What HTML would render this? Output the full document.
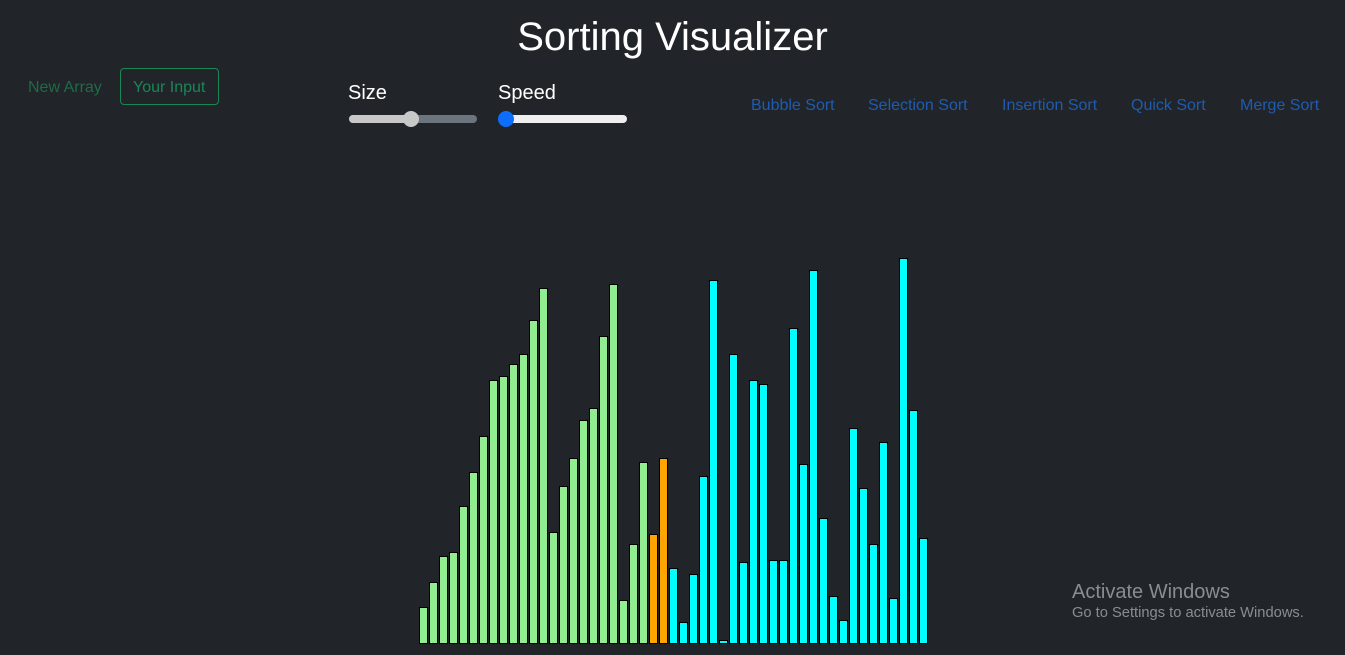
<!DOCTYPE html>
<html><head><meta charset="utf-8"><style>
body{margin:0;width:1345px;height:655px;background:#212529;overflow:hidden;font-family:"Liberation Sans",Arial,sans-serif;position:relative;color:#fff}
.a{position:absolute;white-space:nowrap}
h1{position:absolute;left:0;width:1345px;text-align:center;top:15px;margin:0;font-size:40px;font-weight:normal;color:#fff}
.nav{color:#1f5bb0;font-size:16px;top:97px}
.track{position:absolute;height:8px;border-radius:4px}
.thumb{position:absolute;width:16px;height:16px;border-radius:50%}
#bars{position:absolute;left:419px;bottom:11px;display:flex;align-items:flex-end}
#bars div{width:7px;border:1px solid #000;margin-right:1px;box-sizing:content-box;background:#90ee90}
</style></head><body>
<h1>Sorting Visualizer</h1>
<div class="a" style="left:28px;top:79px;font-size:16px;color:#1e6b45">New Array</div>
<div class="a" style="left:120px;top:68px;width:97px;height:35px;border:1px solid #198754;border-radius:4px;box-sizing:content-box"></div>
<div class="a" style="left:133px;top:79px;font-size:16px;color:#198754">Your Input</div>
<div class="a" style="left:348px;top:82px;font-size:20px">Size</div>
<div class="a" style="left:498px;top:82px;font-size:20px">Speed</div>
<div class="track" style="left:349px;top:115px;width:128px;background:#6c757d"></div>
<div class="track" style="left:349px;top:115px;width:62px;background:#c8c8c8"></div>
<div class="thumb" style="left:403px;top:111px;background:#c8c8c8"></div>
<div class="track" style="left:499px;top:115px;width:128px;background:#efefef"></div>
<div class="thumb" style="left:498px;top:111px;background:#0d6efd"></div>
<div class="a nav" style="left:751px">Bubble Sort</div>
<div class="a nav" style="left:868px">Selection Sort</div>
<div class="a nav" style="left:1002px">Insertion Sort</div>
<div class="a nav" style="left:1131px">Quick Sort</div>
<div class="a nav" style="left:1240px">Merge Sort</div>
<div class="a" style="left:1072px;top:581px;font-size:20px;color:#8a8d90">Activate Windows</div>
<div class="a" style="left:1072px;top:605px;font-size:14.7px;color:#8a8d90">Go to Settings to activate Windows.</div>
<div id="bars">
<div style="height:35px"></div><div style="height:60px"></div><div style="height:86px"></div><div style="height:90px"></div><div style="height:136px"></div><div style="height:170px"></div><div style="height:206px"></div><div style="height:262px"></div><div style="height:266px"></div><div style="height:278px"></div><div style="height:288px"></div><div style="height:322px"></div><div style="height:354px"></div><div style="height:110px"></div><div style="height:156px"></div><div style="height:184px"></div><div style="height:222px"></div><div style="height:234px"></div><div style="height:306px"></div><div style="height:358px"></div><div style="height:42px"></div><div style="height:98px"></div><div style="height:180px"></div>
<div style="height:108px;background:#ffa500"></div><div style="height:184px;background:#ffa500"></div>
<div style="height:74px;background:#0ff"></div><div style="height:20px;background:#0ff"></div><div style="height:68px;background:#0ff"></div><div style="height:166px;background:#0ff"></div><div style="height:362px;background:#0ff"></div><div style="height:2px;background:#0ff"></div><div style="height:288px;background:#0ff"></div><div style="height:80px;background:#0ff"></div><div style="height:262px;background:#0ff"></div><div style="height:258px;background:#0ff"></div><div style="height:82px;background:#0ff"></div><div style="height:82px;background:#0ff"></div><div style="height:314px;background:#0ff"></div><div style="height:178px;background:#0ff"></div><div style="height:372px;background:#0ff"></div><div style="height:124px;background:#0ff"></div><div style="height:46px;background:#0ff"></div><div style="height:22px;background:#0ff"></div><div style="height:214px;background:#0ff"></div><div style="height:154px;background:#0ff"></div><div style="height:98px;background:#0ff"></div><div style="height:200px;background:#0ff"></div><div style="height:44px;background:#0ff"></div><div style="height:384px;background:#0ff"></div><div style="height:232px;background:#0ff"></div><div style="height:104px;background:#0ff"></div>
</div>
</body></html>
